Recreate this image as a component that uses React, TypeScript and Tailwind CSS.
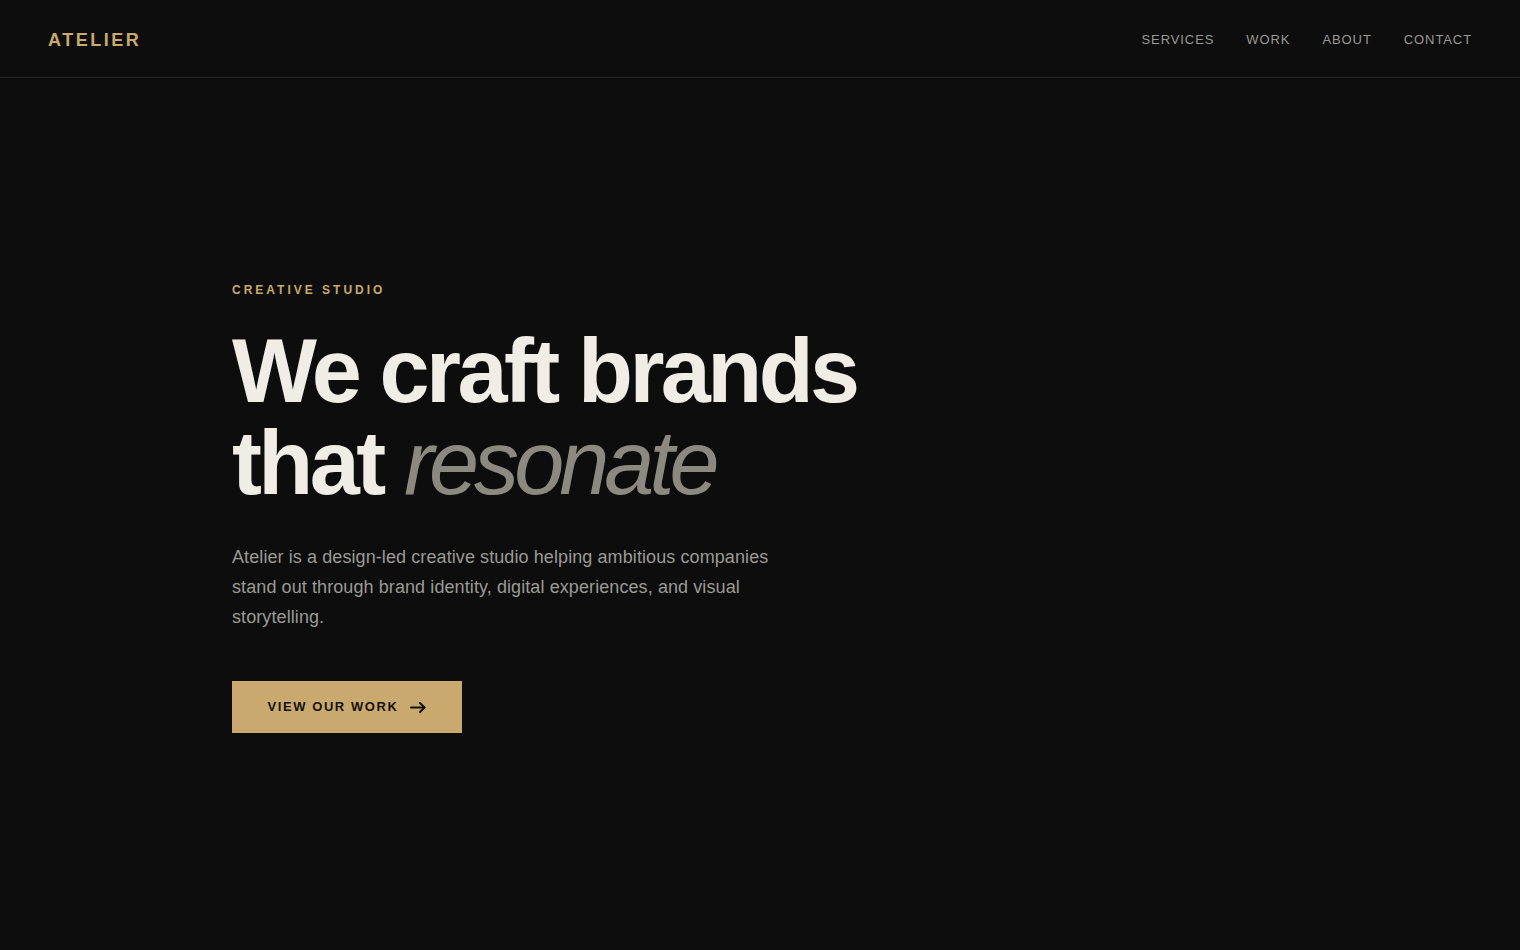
export default function App() {
  return (
    <div className="min-h-[950px] w-full bg-[#0d0d0d] font-['Liberation_Sans',Arial,sans-serif]">
      <header className="flex h-[78px] items-center justify-between border-b border-[#262626] px-12 pt-[2px]">
        <div className="mt-[2px] text-[18px] font-bold tracking-[0.14em] text-[#c9a96e]">ATELIER</div>
        <nav className="flex items-center gap-[32px] text-[13px] tracking-[0.07em] text-[#9a9994]">
          <a>SERVICES</a>
          <a>WORK</a>
          <a>ABOUT</a>
          <a>CONTACT</a>
        </nav>
      </header>
      <main className="pl-[232px] pt-[204px]">
        <div className="text-[12px] font-bold leading-[16px] tracking-[0.25em] text-[#c9a96e]">CREATIVE STUDIO</div>
        <h1 className="mt-[27px] text-[90px] font-bold leading-[92px] tracking-[-0.04em] text-[#f0ede6]">
          We craft brands
          <br />
          that <span className="font-light italic tracking-[-0.055em] text-[#8c8a80]">resonate</span>
        </h1>
        <p className="mt-[33px] max-w-[560px] text-[18px] leading-[30px] tracking-[0.005em] text-[#9b9a95]">
          Atelier is a design-led creative studio helping ambitious companies stand out through brand identity, digital experiences, and visual storytelling.
        </p>
        <button className="mt-[49px] flex h-[52px] w-[230px] items-center justify-center gap-3 bg-[#c9a96e] text-[13px] font-bold tracking-[0.12em] text-[#141210]">
          VIEW OUR WORK
          <svg width="16" height="11" viewBox="0 0 16 11" fill="none" stroke="currentColor" strokeWidth="2" strokeLinecap="round" strokeLinejoin="round">
            <path d="M1 5.5h13.5" />
            <path d="M10 1l4.5 4.5L10 10" />
          </svg>
        </button>
      </main>
    </div>
  );
}
